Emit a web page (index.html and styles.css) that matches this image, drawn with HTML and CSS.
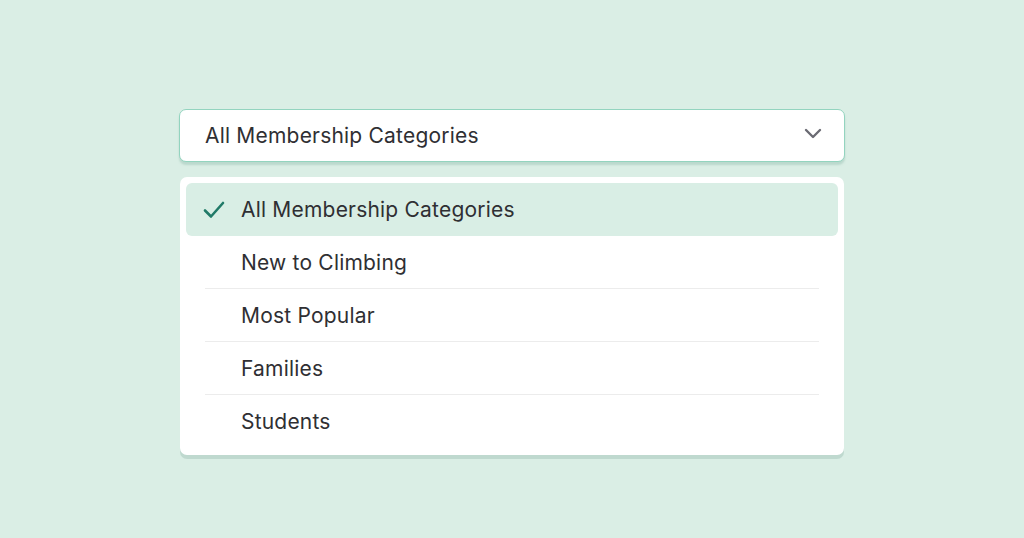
FILE: index.html
```html
<!DOCTYPE html>
<html lang="en">
<head>
    <meta charset="UTF-8">
    <meta name="viewport" content="width=device-width, initial-scale=1.0">
    <title>Membership Categories</title>
    <link rel="stylesheet" href="styles.css">
</head>
<body>
    <div class="container">
        <div class="select">
            <span>All Membership Categories</span>
            <svg class="chevron" width="18" height="12" viewBox="0 0 18 12">
                <path d="M2 2 L9 9 L16 2" fill="none" stroke="#6b6b73" stroke-width="2.4" stroke-linecap="round" stroke-linejoin="round"/>
            </svg>
        </div>

        <ul class="options">
            <li class="option selected">
                <svg class="check" width="22" height="20" viewBox="0 0 22 20">
                    <path d="M2 10.5 L8 16.5 L20 3" fill="none" stroke="#217a68" stroke-width="2.6" stroke-linecap="round" stroke-linejoin="round"/>
                </svg>
                <span>All Membership Categories</span>
            </li>
            <li class="option">New to Climbing</li>
            <li class="option">Most Popular</li>
            <li class="option">Families</li>
            <li class="option last">Students</li>
        </ul>
    </div>
</body>
</html>
```

FILE: styles.css
```css
body {
    font-family: Inter, "Noto Sans", sans-serif;
    background: #daeee5;
    margin: 0;
    min-height: 100vh;
    color: #2f2f33;
}

.container {
    width: 666px;
    margin: 0 auto;
    padding-top: 109px;
}

.select {
    box-sizing: border-box;
    height: 53px;
    background: #fff;
    border: 1.5px solid #93d4bf;
    border-radius: 7px;
    box-shadow: 0 3px 2px rgba(140, 185, 170, 0.4);
    display: flex;
    align-items: center;
    justify-content: space-between;
    padding: 0 22px 0 25px;
    font-size: 21px;
    letter-spacing: 0.2px;
}

.chevron {
    margin-top: -3px;
}

.options {
    list-style: none;
    margin: 15px 1px 0;
    padding: 6px 6px 7px;
    background: #fff;
    border-radius: 7px;
    box-shadow: 0 4px 0 rgba(170, 200, 190, 0.55);
}

.option {
    height: 53px;
    display: flex;
    align-items: center;
    padding-left: 36px;
    margin: 0 19px;
    font-size: 21px;
    letter-spacing: 0.2px;
    border-bottom: 1px solid #ececec;
    box-sizing: border-box;
}

.option.selected {
    margin: 0;
    padding-left: 17px;
    background: #d9eee5;
    border-radius: 6px;
    border-bottom: none;
    gap: 16px;
}

.option.last {
    border-bottom: none;
}
```
